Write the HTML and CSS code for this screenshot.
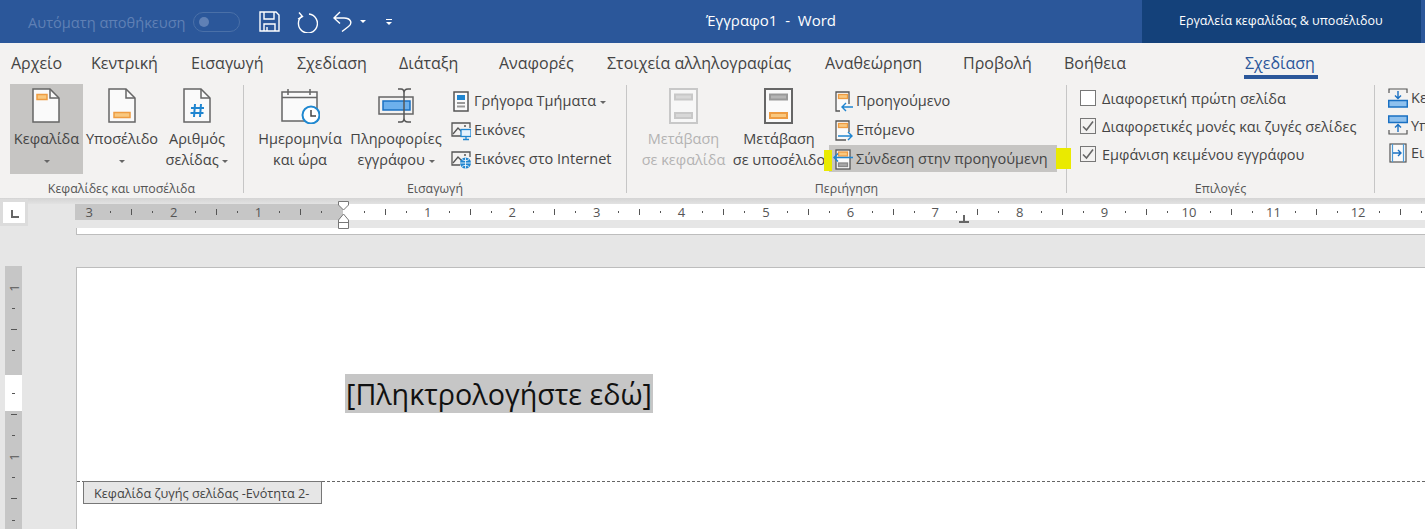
FILE: index.html
```html
<!DOCTYPE html>
<html lang="el">
<head>
  <meta charset="UTF-8" />
  <title>Έγγραφο1 - Word</title>
  <link rel="stylesheet" href="styles.css">
</head>
<body>

  <header class="titlebar">
    <div class="qat">
      <span class="autosave">Αυτόματη αποθήκευση</span>
      <span class="toggle"><span class="knob"></span></span>
      <svg class="qat-save" width="21" height="21" viewBox="0 0 21 21" fill="none" stroke="#fff" stroke-width="1.4"><path d="M1 1H17L20 4V20H1Z"/><path d="M5 1V8H15V1M5 20V13H16V20M8 20V16"/></svg>
      <svg class="qat-redo" width="23" height="22" viewBox="0 0 23 22" fill="none" stroke="#fff" stroke-width="1.4"><path d="M7 5A9.5 9.5 0 1 0 14 3"/><path d="M4 1.500L7.500 5.500L3 8"/></svg>
      <svg class="qat-undo" width="20" height="21" viewBox="0 0 20 21" fill="none" stroke="#fff" stroke-width="1.4"><path d="M7 1L1 7L7 12.500M1 7H11C17.500 7 20 12 15.500 15.500L9 20.500"/></svg>
      <span class="caret caret-white qat-caret"></span>
      <span class="qat-more"><span class="caret caret-white"></span></span>
    </div>
    <div class="doc-title">Έγγραφο1&nbsp; -&nbsp; Word</div>
    <div class="context-title">Εργαλεία κεφαλίδας &amp; υποσέλιδου</div>
  </header>

  <nav class="tabs">
    <span class="tab">Αρχείο</span>
    <span class="tab">Κεντρική</span>
    <span class="tab">Εισαγωγή</span>
    <span class="tab">Σχεδίαση</span>
    <span class="tab">Διάταξη</span>
    <span class="tab">Αναφορές</span>
    <span class="tab">Στοιχεία αλληλογραφίας</span>
    <span class="tab">Αναθεώρηση</span>
    <span class="tab">Προβολή</span>
    <span class="tab">Βοήθεια</span>
    <span class="tab tab-active">Σχεδίαση</span>
  </nav>

  <section class="ribbon">

    <div class="group group-hf">
      <div class="group-body">
        <div class="big-btn btn-pressed w-header">
          <svg class="big-icon" width="36" height="36" viewBox="0 0 36 36" fill="#fafafa" stroke="#666" stroke-width="1.500"><path d="M5 1H22L31 10V34H5Z"/><path d="M22 1V10H31" fill="none"/><rect x="9" y="6.500" width="10" height="5" fill="#f9c87f" stroke="#ee9c42"/></svg>
          <span>Κεφαλίδα</span>
          <span><span class="caret"></span></span>
        </div>
        <div class="big-btn w-footer">
          <svg class="big-icon" width="36" height="36" viewBox="0 0 36 36" fill="#fafafa" stroke="#666" stroke-width="1.500"><path d="M5 1H22L31 10V34H5Z"/><path d="M22 1V10H31" fill="none"/><rect x="10" y="24.500" width="16" height="5" fill="#f9c87f" stroke="#ee9c42"/></svg>
          <span>Υποσέλιδο</span>
          <span><span class="caret"></span></span>
        </div>
        <div class="big-btn w-number">
          <svg class="big-icon" width="36" height="36" viewBox="0 0 36 36" fill="#fafafa" stroke="#666" stroke-width="1.500"><path d="M5 1H22L31 10V34H5Z"/><path d="M22 1V10H31" fill="none"/><path d="M16 16L15 29M22 16L21 29M12 20H25M11.500 25H24.500" fill="none" stroke="#1f85d0" stroke-width="2"/></svg>
          <span>Αριθμός</span>
          <span>σελίδας <span class="caret"></span></span>
        </div>
      </div>
      <div class="group-label">Κεφαλίδες και υποσέλιδα</div>
    </div>
    <div class="sep"></div>

    <div class="group group-insert">
      <div class="group-body">
        <div class="big-btn w-wide">
          <svg class="big-icon" width="40" height="36" viewBox="0 0 40 36" fill="#fafafa" stroke="#666" stroke-width="1.500"><path d="M2 4H37V33H2Z"/><path d="M2 9.500H37M8 1V7M30 1V7" fill="none"/><circle cx="31" cy="27" r="8.500" fill="#fff" stroke="#1f88d0" stroke-width="2"/><path d="M31 22V28H36" fill="none" stroke="#444"/></svg>
          <span>Ημερομηνία</span>
          <span>και ώρα</span>
        </div>
        <div class="big-btn w-wide">
          <svg class="big-icon" width="40" height="36" viewBox="-1 0 40 36" fill="#f3f2f1" stroke="#666" stroke-width="1.500"><rect x="2" y="9" width="34" height="17"/><rect x="6" y="13" width="27" height="9" fill="#6db0ec" stroke="#1a70c2"/><path d="M21 1H24C26 1 27 3 27 5V30C27 32 26 34 24 34H21M34 1H31C28 1 27 3 27 5M27 30C27 32 28 34 31 34H34" fill="none" stroke="#555"/></svg>
          <span>Πληροφορίες</span>
          <span>εγγράφου <span class="caret"></span></span>
        </div>
        <div class="small-col col-insert">
          <div class="small-btn">
            <svg class="small-icon" width="20" height="22" viewBox="0 0 20 22" fill="#fafafa" stroke="#555" stroke-width="1.500"><rect x="3" y="2" width="14" height="19"/><rect x="6" y="5" width="8" height="5" fill="#1f85d0" stroke="none"/><path d="M6 13H14M6 16.500H14" stroke="#999" stroke-width="2"/></svg>
            <span>Γρήγορα Τμήματα <span class="caret"></span></span>
          </div>
          <div class="small-btn">
            <svg class="small-icon" width="20" height="22" viewBox="0 0 20 22" fill="none" stroke="#555" stroke-width="1.300"><path d="M11 17H1V4H19V9"/><path d="M2 15L7 9L11 13"/><circle cx="14" cy="7" r="1" fill="#555" stroke="none"/><rect x="10" y="10.500" width="10" height="7" fill="#e4f1fc" stroke="#1f85d0"/><path d="M15 17.500V20M12 20.500H18" stroke="#1f85d0"/></svg>
            <span>Εικόνες</span>
          </div>
          <div class="small-btn">
            <svg class="small-icon" width="20" height="22" viewBox="0 0 20 22" fill="none" stroke="#555" stroke-width="1.300"><path d="M9 17H1V4H19V9"/><path d="M2 15L7 9L11 13"/><circle cx="14" cy="7" r="1" fill="#555" stroke="none"/><circle cx="14.500" cy="15" r="5.500" fill="#1f85d0" stroke="none"/><path d="M9 15H20M14.500 9.500V20.500M11 11.500C13 13 16 13 18 11.500M11 18.500C13 17 16 17 18 18.500" stroke="#fff" stroke-width="0.800"/></svg>
            <span>Εικόνες στο Internet</span>
          </div>
        </div>
      </div>
      <div class="group-label">Εισαγωγή</div>
    </div>
    <div class="sep"></div>

    <div class="group group-nav">
      <div class="group-body">
        <div class="big-btn w-goto btn-disabled">
          <svg class="big-icon" width="36" height="36" viewBox="0 0 36 36" fill="#f7f7f7" stroke="#c8c8c8" stroke-width="2"><rect x="4" y="1" width="27" height="34"/><rect x="9" y="6.500" width="17" height="5" fill="#d8d8d8"/><rect x="9" y="25" width="17" height="5" fill="#d8d8d8"/></svg>
          <span>Μετάβαση</span>
          <span>σε κεφαλίδα</span>
        </div>
        <div class="big-btn w-goto">
          <svg class="big-icon" width="36" height="36" viewBox="0 0 36 36" fill="#fafafa" stroke="#666" stroke-width="2"><rect x="4" y="1" width="27" height="34"/><rect x="9" y="6.500" width="17" height="5" fill="#b5b5b5" stroke="#999"/><rect x="9" y="25" width="17" height="5" fill="#f9c87f" stroke="#ee9c42"/></svg>
          <span>Μετάβαση</span>
          <span>σε υποσέλιδο</span>
        </div>
        <div class="small-col col-nav">
          <div class="small-btn">
            <svg class="small-icon" width="20" height="22" viewBox="0 0 20 22" fill="#fafafa" stroke="#555" stroke-width="1.300"><path d="M16 14V2H3V21H7"/><rect x="5.500" y="4.500" width="9" height="4" fill="#f9c87f" stroke="#ee9c42"/><path d="M20 17H9M13 13L9 17L13 21" fill="none" stroke="#1f85d0" stroke-width="1.400"/></svg>
            <span>Προηγούμενο</span>
          </div>
          <div class="small-btn">
            <svg class="small-icon" width="20" height="22" viewBox="0 0 20 22" fill="#fafafa" stroke="#555" stroke-width="1.300"><path d="M16 13V2H3V21H13"/><rect x="5.500" y="4.500" width="9" height="4" fill="#f9c87f" stroke="#ee9c42"/><path d="M5 17H19M15 13L19 17L15 21" fill="none" stroke="#1f85d0" stroke-width="1.400"/></svg>
            <span>Επόμενο</span>
          </div>
          <div class="small-btn link-btn">
            <svg class="small-icon" width="20" height="22" viewBox="0 0 20 22" fill="#fafafa" stroke="#555" stroke-width="1.300"><rect x="3" y="2" width="14" height="19"/><rect x="5.500" y="4" width="9" height="4" fill="#f9c87f" stroke="#ee9c42"/><rect x="5.500" y="15" width="9" height="3.500" fill="#a8a8a8" stroke="#888"/><path d="M20 9.500H1M5 5.500L1 9.500L5 13.500" fill="none" stroke="#1f85d0" stroke-width="1.400"/></svg>
            <span>Σύνδεση στην προηγούμενη</span>
          </div>
        </div>
      </div>
      <div class="group-label">Περιήγηση</div>
    </div>
    <div class="sep"></div>

    <div class="group group-options">
      <div class="group-body check-col">
        <label class="check-row"><span class="checkbox"></span>Διαφορετική πρώτη σελίδα</label>
        <label class="check-row"><span class="checkbox checked"><svg width="14" height="14" viewBox="0 0 14 14" fill="none" stroke="#666" stroke-width="1.600"><path d="M2 7.500L5.500 11L12 2.500"/></svg></span>Διαφορετικές μονές και ζυγές σελίδες</label>
        <label class="check-row"><span class="checkbox checked"><svg width="14" height="14" viewBox="0 0 14 14" fill="none" stroke="#666" stroke-width="1.600"><path d="M2 7.500L5.500 11L12 2.500"/></svg></span>Εμφάνιση κειμένου εγγράφου</label>
      </div>
      <div class="group-label">Επιλογές</div>
    </div>
    <div class="sep"></div>

    <div class="group group-position">
      <div class="pos-row">
        <svg width="20" height="20" viewBox="0 0 20 20" fill="none" stroke="#555" stroke-width="1.200"><path d="M1 5V1H19V5"/><path d="M10 3V10M7 7.500L10 10.500L13 7.500" stroke="#1a70c2" stroke-width="1.400"/><rect x="0.700" y="12.500" width="18.600" height="6.500" fill="#8fc1ee" stroke="#1a70c2" stroke-width="1.500"/></svg>
        <span>Κε</span>
      </div>
      <div class="pos-row">
        <svg width="20" height="20" viewBox="0 0 20 20" fill="none" stroke="#555" stroke-width="1.200"><rect x="0.700" y="1" width="18.600" height="6.500" fill="#8fc1ee" stroke="#1a70c2" stroke-width="1.500"/><path d="M10 17V10M7 12.500L10 9.500L13 12.500" stroke="#1a70c2" stroke-width="1.400"/><path d="M1 15V19H19V15"/></svg>
        <span>Υπ</span>
      </div>
      <div class="pos-row">
        <svg width="20" height="20" viewBox="0 0 20 20" fill="#fafafa" stroke="#555" stroke-width="1.200"><rect x="2" y="1" width="16" height="18"/><path d="M4.500 1V19M15.500 1V19" stroke="#4a9ad8"/><path d="M5 10H13M10 7L13 10L10 13" fill="none" stroke="#1a70c2" stroke-width="1.400"/></svg>
        <span>Ει</span>
      </div>
    </div>
  </section>

  <main class="workspace">
    <div class="ruler-row">
      <div class="tab-stop"><span class="tab-l"></span></div>
      <div class="ruler">
        <div class="ruler-margin">
          <span class="rcell"><b>3</b></span>
          <span class="rcell"><b>2</b></span>
          <span class="rcell"><b>1</b></span>
        </div>
        <div class="ruler-text">
          <span class="rcell"></span>
          <span class="rcell"><b>1</b></span>
          <span class="rcell"><b>2</b></span>
          <span class="rcell"><b>3</b></span>
          <span class="rcell"><b>4</b></span>
          <span class="rcell"><b>5</b></span>
          <span class="rcell"><b>6</b></span>
          <span class="rcell"><b>7</b></span>
          <span class="rcell"><b>8</b></span>
          <span class="rcell"><b>9</b></span>
          <span class="rcell"><b>10</b></span>
          <span class="rcell"><b>11</b></span>
          <span class="rcell"><b>12</b></span>
        </div>
        <svg class="indent-marker" width="13" height="28" viewBox="0 0 13 28" fill="#fff" stroke="#777"><path d="M1.500 0.500H11.500V4L6.500 9L1.500 4Z"/><path d="M6.500 13L11.500 19V27.500H1.500V19Z"/><path d="M1.500 21.500H11.500"/></svg>
        <span class="stop-marker"></span>
      </div>
    </div>
    <div class="prev-page"></div>

    <div class="doc-row">
      <div class="vruler">
        <div class="vr-top">
          <span class="vmark"><b>1</b></span>
          <span class="vmark"><i class="vdot"></i></span>
          <span class="vmark"><i class="vtick"></i></span>
          <span class="vmark"><i class="vdot"></i></span>
        </div>
        <div class="vr-mid"><span class="vmark"><i class="vdot"></i></span></div>
        <div class="vr-bottom">
          <span class="vmark"><i class="vtick"></i></span>
          <span class="vmark"><i class="vdot"></i></span>
          <span class="vmark"><b>1</b></span>
          <span class="vmark"><i class="vdot"></i></span>
          <span class="vmark"><i class="vtick"></i></span>
          <span class="vmark"><i class="vdot"></i></span>
        </div>
      </div>
      <div class="page">
        <div class="header-area"><span class="placeholder">[Πληκτρολογήστε εδώ]</span></div>
        <div class="header-line">
          <span class="header-tag">Κεφαλίδα ζυγής σελίδας -Ενότητα 2-</span>
        </div>
      </div>
    </div>
  </main>

</body>
</html>
```

FILE: styles.css
```css
* {
  box-sizing: border-box;
}
html, body {
  margin: 0;
  height: 529px;
  overflow: hidden;
}
body {
  font-family: "Open Sans", "Noto Sans", sans-serif;
  font-size: 14.5px;
  color: #444;
  background: #e6e6e6;
}

/* title bar */
.titlebar {
  display: flex;
  height: 43px;
  background: #2b579a;
  color: #fff;
}
.qat {
  display: flex;
  align-items: center;
  width: 706px;
  padding-left: 28px;
}
.autosave {
  width: 158px;
  font-size: 14.6px;
  white-space: nowrap;
  color: #5f80b5;
}
.toggle {
  display: flex;
  align-items: center;
  width: 47px;
  height: 20px;
  margin-left: 7px;
  padding-left: 5px;
  border: 1px solid #4a70a8;
  border-radius: 10px;
}
.knob {
  width: 10px;
  height: 10px;
  border-radius: 50%;
  background: #5f80b5;
}
.qat-save {
  margin-left: 19px;
}
.qat-redo {
  margin-left: 15px;
}
.qat-undo {
  margin-left: 15px;
}
.qat-caret {
  margin-left: 7px;
}
.qat-more {
  display: flex;
  flex-direction: column;
  margin-left: 20px;
  width: 6px;
  border-top: 1px solid #fff;
  padding-top: 2px;
}
.doc-title {
  width: 436px;
  line-height: 41px;
  font-size: 15px;
  white-space: nowrap;
}
.context-title {
  width: 279px;
  padding-left: 37px;
  line-height: 41px;
  font-size: 12.5px;
  background: #14417a;
  white-space: nowrap;
}

.caret {
  display: inline-block;
  vertical-align: middle;
  width: 0;
  height: 0;
  border-left: 3px solid transparent;
  border-right: 3px solid transparent;
  border-top: 3px solid #666;
}
.caret-white {
  border-top-color: #fff;
}

/* tabs */
.tabs {
  display: flex;
  height: 40px;
  padding-left: 11px;
  background: #f3f2f1;
  font-size: 16px;
  white-space: nowrap;
}
.tab {
  flex: none;
  line-height: 40px;
}
.tab:nth-child(1) { width: 80px; }
.tab:nth-child(2) { width: 100px; }
.tab:nth-child(3) { width: 106px; }
.tab:nth-child(4) { width: 102px; }
.tab:nth-child(5) { width: 100px; }
.tab:nth-child(6) { width: 108px; }
.tab:nth-child(7) { width: 218px; }
.tab:nth-child(8) { width: 138px; }
.tab:nth-child(9) { width: 101px; }
.tab:nth-child(10) { width: 180px; }
.tab-active {
  height: 36px;
  padding: 0 3px 0 1px;
  color: #2b579a;
  border-bottom: 4px solid #2b579a;
}

/* ribbon */
.ribbon {
  display: flex;
  height: 115px;
  background: #f3f2f1;
  overflow: hidden;
}
.sep {
  flex: none;
  width: 1px;
  margin: 2px 0 5px;
  background: #c6c6c6;
}
.group {
  flex: none;
  display: flex;
  flex-direction: column;
  justify-content: space-between;
}
.group-hf {
  width: 243px;
}
.group-insert {
  width: 382px;
}
.group-nav {
  width: 439px;
}
.group-options {
  width: 307px;
}
.group-position {
  flex: 1;
  justify-content: flex-start;
  padding: 1px 0 0 13px;
}
.group-body {
  display: flex;
  padding-top: 1px;
}
.group-hf .group-body {
  padding-left: 10px;
}
.group-insert .group-body {
  padding-left: 8px;
}
.group-nav .group-body {
  padding-left: 9px;
}
.group-label {
  height: 20px;
  padding-top: 1px;
  line-height: 20px;
  font-size: 12.4px;
  text-align: center;
  color: #555;
}

.big-btn {
  display: flex;
  flex-direction: column;
  align-items: center;
  height: 90px;
  padding-top: 4px;
  line-height: 21px;
  white-space: nowrap;
}
.big-icon {
  margin-bottom: 4px;
  flex: none;
}
.btn-pressed {
  background: #c6c5c3;
}
.btn-pressed .big-icon {
  margin-right: 2px;
}
.btn-disabled {
  color: #b3b3b3;
}
.w-header {
  width: 73px;
}
.w-footer {
  width: 78px;
}
.w-number {
  width: 72px;
}
.w-wide {
  width: 96px;
}
.w-goto {
  width: 95px;
}
.w-goto + .w-goto {
  width: 96px;
}

.small-col {
  display: flex;
  flex-direction: column;
  padding-top: 3px;
}
.col-insert {
  margin-left: 6px;
}
.col-nav {
  margin-left: 2px;
}
.small-btn {
  position: relative;
  display: flex;
  align-items: center;
  height: 29px;
  padding-left: 1px;
  padding-bottom: 2px;
  white-space: nowrap;
}
.small-icon {
  flex: none;
  margin-right: 3px;
}
.col-nav .small-btn {
  width: 228px;
  padding-left: 4px;
}
.col-nav .small-btn.link-btn {
  height: 27px;
  padding-bottom: 0;
  background: #c6c5c3;
}
.link-btn::before,
.link-btn::after {
  content: "";
  position: absolute;
  height: 21px;
  background: #eaea00;
}
.link-btn::before {
  left: -5px;
  top: 5px;
  width: 8px;
}
.link-btn::after {
  left: 227px;
  top: 3px;
  width: 15px;
}

.check-col {
  flex-direction: column;
  padding: 1px 0 0 13px;
}
.check-row {
  display: flex;
  align-items: center;
  height: 28px;
  white-space: nowrap;
}
.checkbox {
  display: flex;
  align-items: center;
  justify-content: center;
  width: 16px;
  height: 16px;
  margin-right: 6px;
  border: 1px solid #777;
  background: #fff;
}
.checked {
  background: #f3f2f1;
}

.pos-row {
  display: flex;
  align-items: center;
  gap: 3px;
  height: 27.5px;
  white-space: nowrap;
}

/* rulers and page */
.workspace {
  padding-top: 6px;
  background: linear-gradient(#d4d4d4, #e2e2e2 6px, #e6e6e6 6px);
}
.ruler-row {
  display: flex;
  height: 24px;
  position: relative;
}
.tab-stop {
  position: absolute;
  left: 0;
  top: -5px;
  display: flex;
  align-items: center;
  justify-content: center;
  width: 28px;
  height: 27px;
  border: 3px solid #dcdcdc;
  background: #fff;
}
.tab-l {
  width: 8px;
  height: 8px;
  margin: 2px 0 0 1px;
  border-left: 2px solid #666;
  border-bottom: 2px solid #666;
}
.ruler {
  position: relative;
  display: flex;
  margin-left: 75px;
  height: 16px;
  font-size: 13px;
  line-height: 16px;
  color: #555;
}
.ruler-margin {
  display: flex;
  justify-content: flex-end;
  width: 268px;
  background: #c6c6c6;
}
.ruler-text {
  display: flex;
  width: 1082px;
  background: #fff;
  overflow: hidden;
}
.rcell {
  flex: none;
  width: 84.6px;
  background:
    linear-gradient(#555, #555) 21px 50% / 1px 2px no-repeat,
    linear-gradient(#555, #555) 42px 50% / 1px 6px no-repeat,
    linear-gradient(#555, #555) 63px 50% / 1px 2px no-repeat;
}
.rcell b {
  display: inline-block;
  width: 20px;
  margin-left: -10px;
  font-weight: normal;
  text-align: center;
}
.indent-marker {
  position: absolute;
  left: 262px;
  top: -3px;
}
.stop-marker {
  position: absolute;
  left: 884px;
  top: 11px;
  width: 10px;
  height: 8px;
  background:
    linear-gradient(#666, #666) 4px 0 / 2px 6px no-repeat,
    linear-gradient(#666, #666) 0 6px / 10px 2px no-repeat;
}
.prev-page {
  height: 7px;
  margin-left: 76px;
  border-left: 1px solid #bdbdbd;
  border-bottom: 1px solid #bdbdbd;
  background: #fff;
}
.doc-row {
  display: flex;
  margin-top: 31px;
  height: 263px;
}
.vruler {
  flex: none;
  width: 17px;
  margin-left: 5px;
  font-size: 13px;
  color: #555;
}
.vr-top {
  height: 109px;
  padding-top: 11px;
  background: #c6c6c6;
}
.vr-mid {
  display: flex;
  align-items: center;
  height: 36px;
  background: #fff;
}
.vr-bottom {
  display: flex;
  flex-direction: column;
  height: 118px;
  background: #c6c6c6;
}
.vr-bottom .vmark:first-child {
  margin-top: -7px;
}
.vmark {
  flex: none;
  display: flex;
  align-items: center;
  justify-content: center;
  width: 17px;
  height: 21.1px;
}
.vmark b {
  font-weight: normal;
  transform: rotate(-90deg);
}
.vdot {
  width: 3px;
  height: 1px;
  background: #555;
}
.vtick {
  width: 6px;
  height: 1px;
  background: #555;
}
.page {
  flex: 1;
  margin: 1px 0 0 54px;
  border-top: 1px solid #bdbdbd;
  border-left: 1px solid #bdbdbd;
  background: #fff;
}
.header-area {
  height: 213px;
  padding: 106px 0 0 268px;
}
.placeholder {
  display: inline-block;
  height: 39px;
  padding: 0 1px;
  font-family: "Open Sans", sans-serif;
  font-size: 28.7px;
  line-height: 39px;
  color: #111;
  background: #c6c6c6;
  white-space: nowrap;
}
.header-line {
  border-top: 1px dashed #666;
  padding-left: 6px;
}
.header-tag {
  display: inline-block;
  width: 239px;
  height: 23px;
  margin-top: -1px;
  padding-left: 10px;
  border: 1px solid #777;
  background: #e6e6e6;
  font-size: 12.7px;
  line-height: 22px;
  white-space: nowrap;
}
```
